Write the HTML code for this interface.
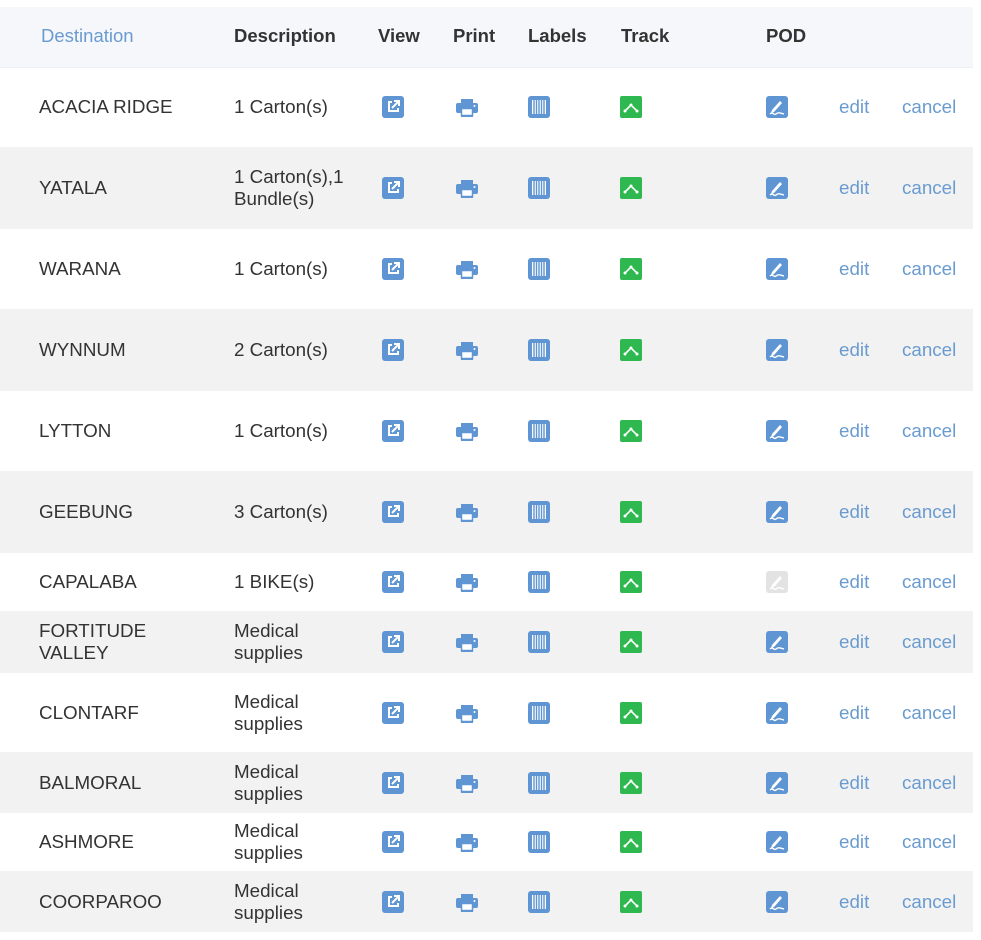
<!DOCTYPE html><html><head><meta charset="utf-8"><style>
body{margin:0;background:#fff;font-family:"Liberation Sans",Arial,sans-serif;width:981px;height:940px;position:relative;overflow:hidden}
.r{position:absolute;left:0;width:973px;display:block}
.g{background:#f2f2f2}
.c{position:absolute;top:0;height:100%;display:flex;align-items:center;font-size:18.8px;color:#333;line-height:22px}
.h{background:#f5f7fb;border-bottom:1px solid #eceff4}
.h .c{font-weight:bold;color:#333;font-size:18.5px;padding-bottom:3px;box-sizing:border-box}
.a{color:#6a9bd0}
svg{display:block}
</style></head><body>
<div class="r h" style="top:7px;height:60px">
<div class="c a" style="left:41px;font-weight:normal;color:#6a9bd0">Destination</div>
<div class="c" style="left:234px">Description</div>
<div class="c" style="left:378px">View</div>
<div class="c" style="left:453px">Print</div>
<div class="c" style="left:528px">Labels</div>
<div class="c" style="left:621px">Track</div>
<div class="c" style="left:766px">POD</div>
</div>
<div id="rows"></div>
<script>
var V='<svg width="22" height="22" viewBox="0 0 22 22"><rect width="22" height="22" rx="3" fill="#5f95d2"/><path d="M10 6H7v9h9v-3" fill="none" stroke="#fff" stroke-width="2"/><path d="M10 12l6-6M12 5h5v5" fill="none" stroke="#fff" stroke-width="2"/></svg>';
var P='<svg width="22" height="22" viewBox="0 0 22 22"><rect x="5" y="3" width="12" height="5" fill="#5f95d2"/><rect x="0" y="7" width="22" height="10" rx="2" fill="#5f95d2"/><rect x="5.5" y="12.5" width="11" height="7" fill="#fff" stroke="#5f95d2" stroke-width="1.5"/><rect x="5" y="19" width="12" height="2" fill="#5f95d2"/><circle cx="18.5" cy="10" r="1" fill="#fff"/></svg>';
var L='<svg width="22" height="22" viewBox="0 0 22 22"><rect width="22" height="22" rx="3" fill="#5f95d2"/><rect x="4" y="4" width="14" height="14" fill="#fff"/><path d="M6 4v14M8.5 4v14M11 4v14M13.5 4v14M16 4v14" stroke="#5f95d2" stroke-width="1.4"/></svg>';
var T='<svg width="22" height="22" viewBox="0 0 22 22"><rect width="22" height="22" rx="2" fill="#2fb84f"/><path d="M5 15l6-6 6 6" fill="none" stroke="#fff" stroke-width="1.6"/><circle cx="5" cy="15" r="1.5" fill="#fff"/><circle cx="11" cy="9" r="1.5" fill="#fff"/><circle cx="17" cy="15" r="1.5" fill="#fff"/></svg>';
function D(c){return '<svg width="22" height="22" viewBox="0 0 22 22"><rect width="22" height="22" rx="3" fill="'+c+'"/><path d="M6 14l8-9 2 2-8 9-3 1z" fill="#fff"/><path d="M4 18c3-3 4 2 6 0s4-1 8 0" fill="none" stroke="#fff" stroke-width="1.4"/></svg>';}
var rows=[[67,80,"ACACIA RIDGE","1 Carton(s)"],[147,82,"YATALA","1 Carton(s),1<br>Bundle(s)"],[229,80,"WARANA","1 Carton(s)"],[309,82,"WYNNUM","2 Carton(s)"],[391,80,"LYTTON","1 Carton(s)"],[471,82,"GEEBUNG","3 Carton(s)"],[553,58,"CAPALABA","1 BIKE(s)",1],[611,62,"FORTITUDE<br>VALLEY","Medical<br>supplies"],[673,79,"CLONTARF","Medical<br>supplies"],[752,61,"BALMORAL","Medical<br>supplies"],[813,58,"ASHMORE","Medical<br>supplies"],[871,61,"COORPAROO","Medical<br>supplies"]];
var h='';rows.forEach(function(r,i){h+='<div class="r'+(i%2?' g':'')+'" style="top:'+r[0]+'px;height:'+r[1]+'px">'+
'<div class="c" style="left:39px">'+r[2]+'</div><div class="c" style="left:234px">'+r[3]+'</div>'+
'<div class="c" style="left:382px">'+V+'</div><div class="c" style="left:456px">'+P+'</div><div class="c" style="left:528px">'+L+'</div><div class="c" style="left:620px">'+T+'</div><div class="c" style="left:766px">'+D(r[4]?'#e3e3e3':'#5f95d2')+'</div>'+
'<div class="c a" style="left:839px">edit</div><div class="c a" style="left:902px">cancel</div></div>';});
document.getElementById('rows').innerHTML=h;
</script>
</body></html>
